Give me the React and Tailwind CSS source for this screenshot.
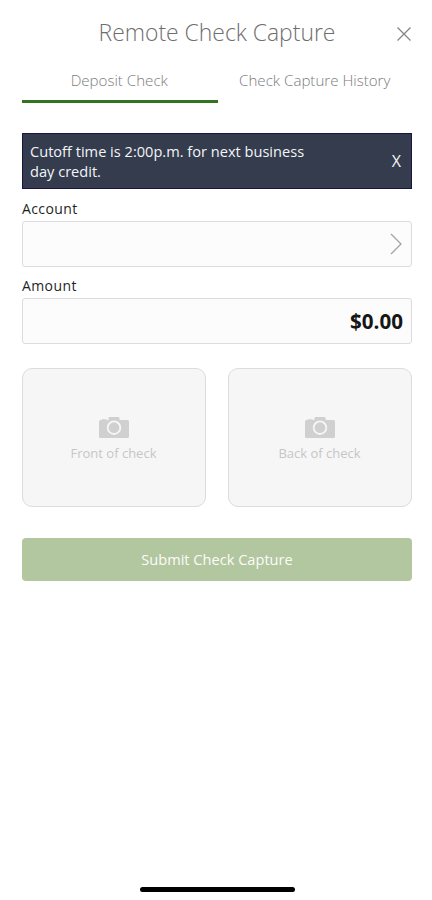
const tabs = [
  { label: 'Deposit Check', active: true },
  { label: 'Check Capture History', active: false },
]

const sides = ['Front of check', 'Back of check']

function CloseIcon() {
  return (
    <svg viewBox="0 0 14 14" className="w-3.5 h-3.5" fill="none" stroke="#858585" strokeWidth="1.3">
      <path d="M0.5 0.5 13.5 13.5M13.5 0.5 0.5 13.5" />
    </svg>
  )
}

function ChevronIcon() {
  return (
    <svg viewBox="0 0 12 22" className="w-3 h-[22px]" fill="none" stroke="#a3a3a3" strokeWidth="1.3">
      <path d="M1 1 11 11 1 21" />
    </svg>
  )
}

function CameraIcon() {
  return (
    <svg viewBox="0 0 30 21" className="w-[30px] h-[21px]">
      <path
        fill="#d0d0d0"
        d="M1.500 3H2.500V2.200H7.500V3H9.500V1.200Q9.500 0 10.700 0h8.600q1.200 0 1.200 1.200V3H28.500Q30 3 30 4.500v15q0 1.500-1.500 1.500h-27Q0 21 0 19.500v-15Q0 3 1.500 3Z"
      />
      <circle cx="15" cy="10.700" r="6.300" fill="#d0d0d0" stroke="#f6f6f6" strokeWidth="1.800" />
    </svg>
  )
}

export default function App() {
  return (
    <div className="w-[432px] h-[900px] bg-white flex flex-col pl-[22px] pr-5 font-['Open_Sans','Noto_Sans',sans-serif] overflow-hidden">
      {/* Header */}
      <header className="h-[66px] grid grid-cols-[1fr_auto_1fr] items-center">
        <h1 className="col-start-2 text-[22.9px] leading-none font-light text-[#6e6e6e] whitespace-nowrap">
          Remote Check Capture
        </h1>
        <button className="justify-self-end pr-[1.5px] pt-0.5" aria-label="Close">
          <CloseIcon />
        </button>
      </header>

      {/* Tabs */}
      <nav className="flex h-[37px]">
        {tabs.map((tab) => (
          <button
            key={tab.label}
            className={`flex-1 pb-1 border-b-[3px] text-[15.1px] font-light leading-none whitespace-nowrap text-[#7c7c7c] ${
              tab.active ? 'pr-px border-[#347321]' : 'border-transparent'
            }`}
          >
            {tab.label}
          </button>
        ))}
      </nav>

      {/* Cutoff notice */}
      <div className="mt-[30px] h-14 pl-[7px] pr-2.5 flex items-center justify-between bg-[#343c4e] border border-[#15183c] text-[#f3f4f6]">
        <p className="w-[290px] pb-px text-[14.6px] leading-5">Cutoff time is 2:00p.m. for next business day credit.</p>
        <button className="text-base leading-none">X</button>
      </div>

      {/* Form */}
      <label className="mt-2.5 h-[22px] text-[14px] leading-5 tracking-[0.4px] text-[#1f1f1f]">Account</label>
      <button className="h-[46px] pr-[9px] flex items-center justify-end bg-[#fcfcfc] border border-[#dcdcdc] rounded-[3px]" aria-label="Choose account">
        <ChevronIcon />
      </button>
      <label className="mt-[9px] h-[22px] text-[14px] leading-5 tracking-[0.4px] text-[#1f1f1f]">Amount</label>
      <div className="h-[46px] pr-2 flex items-center justify-end bg-[#fcfcfc] border border-[#dcdcdc] rounded-[3px] text-[20.6px] font-bold text-[#161616]">
        $0.00
      </div>

      {/* Check photos */}
      <div className="mt-6 grid grid-cols-2 gap-[22px]">
        {sides.map((side) => (
          <button
            key={side}
            className="h-[139px] pt-1 pr-px flex flex-col items-center justify-center bg-[#f6f6f6] border border-[#dcdcdc] rounded-[10px] text-[13px] leading-5 text-[#c6c6c6]"
          >
            <CameraIcon />
            <span className="mt-[5px]">{side}</span>
          </button>
        ))}
      </div>

      <button className="mt-[31px] h-[43px] pt-px bg-[#b2c69f] rounded-sm text-[14.6px] text-[#fbfdf9]">
        Submit Check Capture
      </button>

      {/* Home indicator */}
      <div className="mt-auto mb-2 self-center w-[155px] h-[5px] rounded-full bg-black" />
    </div>
  )
}
